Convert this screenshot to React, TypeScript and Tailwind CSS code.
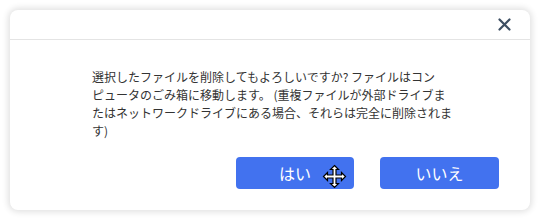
import React from "react";

function MoveCursor() {
  return (
    <svg width="25" height="25" viewBox="0 0 25 25" className="absolute left-[322px] top-[164px]">
      <path
        d="M12.5 1.5 L16.5 5.5 L14 5.5 L14 11 L19.5 11 L19.5 8.5 L23.5 12.5 L19.5 16.5 L19.5 14 L14 14 L14 19.5 L16.5 19.5 L12.5 23.5 L8.5 19.5 L11 19.5 L11 14 L5.5 14 L5.5 16.5 L1.5 12.5 L5.5 8.5 L5.5 11 L11 11 L11 5.5 L8.5 5.5 Z"
        fill="#ffffff"
        stroke="#000000"
        strokeWidth="1.2"
        strokeLinejoin="miter"
      />
    </svg>
  );
}

export default function App() {
  return (
    <div className="relative w-[540px] h-[220px] bg-white p-[10px]" style={{ fontFamily: '"Noto Sans CJK JP", "Noto Sans", sans-serif' }}>
      <div className="w-[520px] h-[200px] rounded-[8px] bg-white shadow-[0_0_6px_2px_rgba(0,0,0,0.12)] flex flex-col">
        <div className="h-[30px] border-b border-[#e4e4e4] flex items-center justify-end pr-[19px]">
          <svg width="13" height="13" viewBox="0 0 13 13">
            <path d="M1.5 1.5 L11.5 11.5 M11.5 1.5 L1.5 11.5" stroke="#3d4f63" strokeWidth="2.2" strokeLinecap="round" />
          </svg>
        </div>
        <div className="pl-[82px] pt-[28px] text-[12px] leading-[18px] text-[#333333]">
          <div className="whitespace-nowrap">選択したファイルを削除してもよろしいですか? ファイルはコン</div>
          <div className="whitespace-nowrap">ピュータのごみ箱に移動します。 (重複ファイルが外部ドライブま</div>
          <div className="whitespace-nowrap">たはネットワークドライブにある場合、それらは完全に削除されま</div>
          <div className="whitespace-nowrap">す)</div>
        </div>
        <div className="mt-[17px] flex justify-end gap-[26px] pr-[31px]">
          <button className="w-[118px] h-[32px] rounded-[4px] bg-[#4272ef] text-white text-[16px] flex items-center justify-center">はい</button>
          <button className="w-[119px] h-[32px] rounded-[4px] bg-[#4272ef] text-white text-[16px] flex items-center justify-center">いいえ</button>
        </div>
      </div>
      <MoveCursor />
    </div>
  );
}
